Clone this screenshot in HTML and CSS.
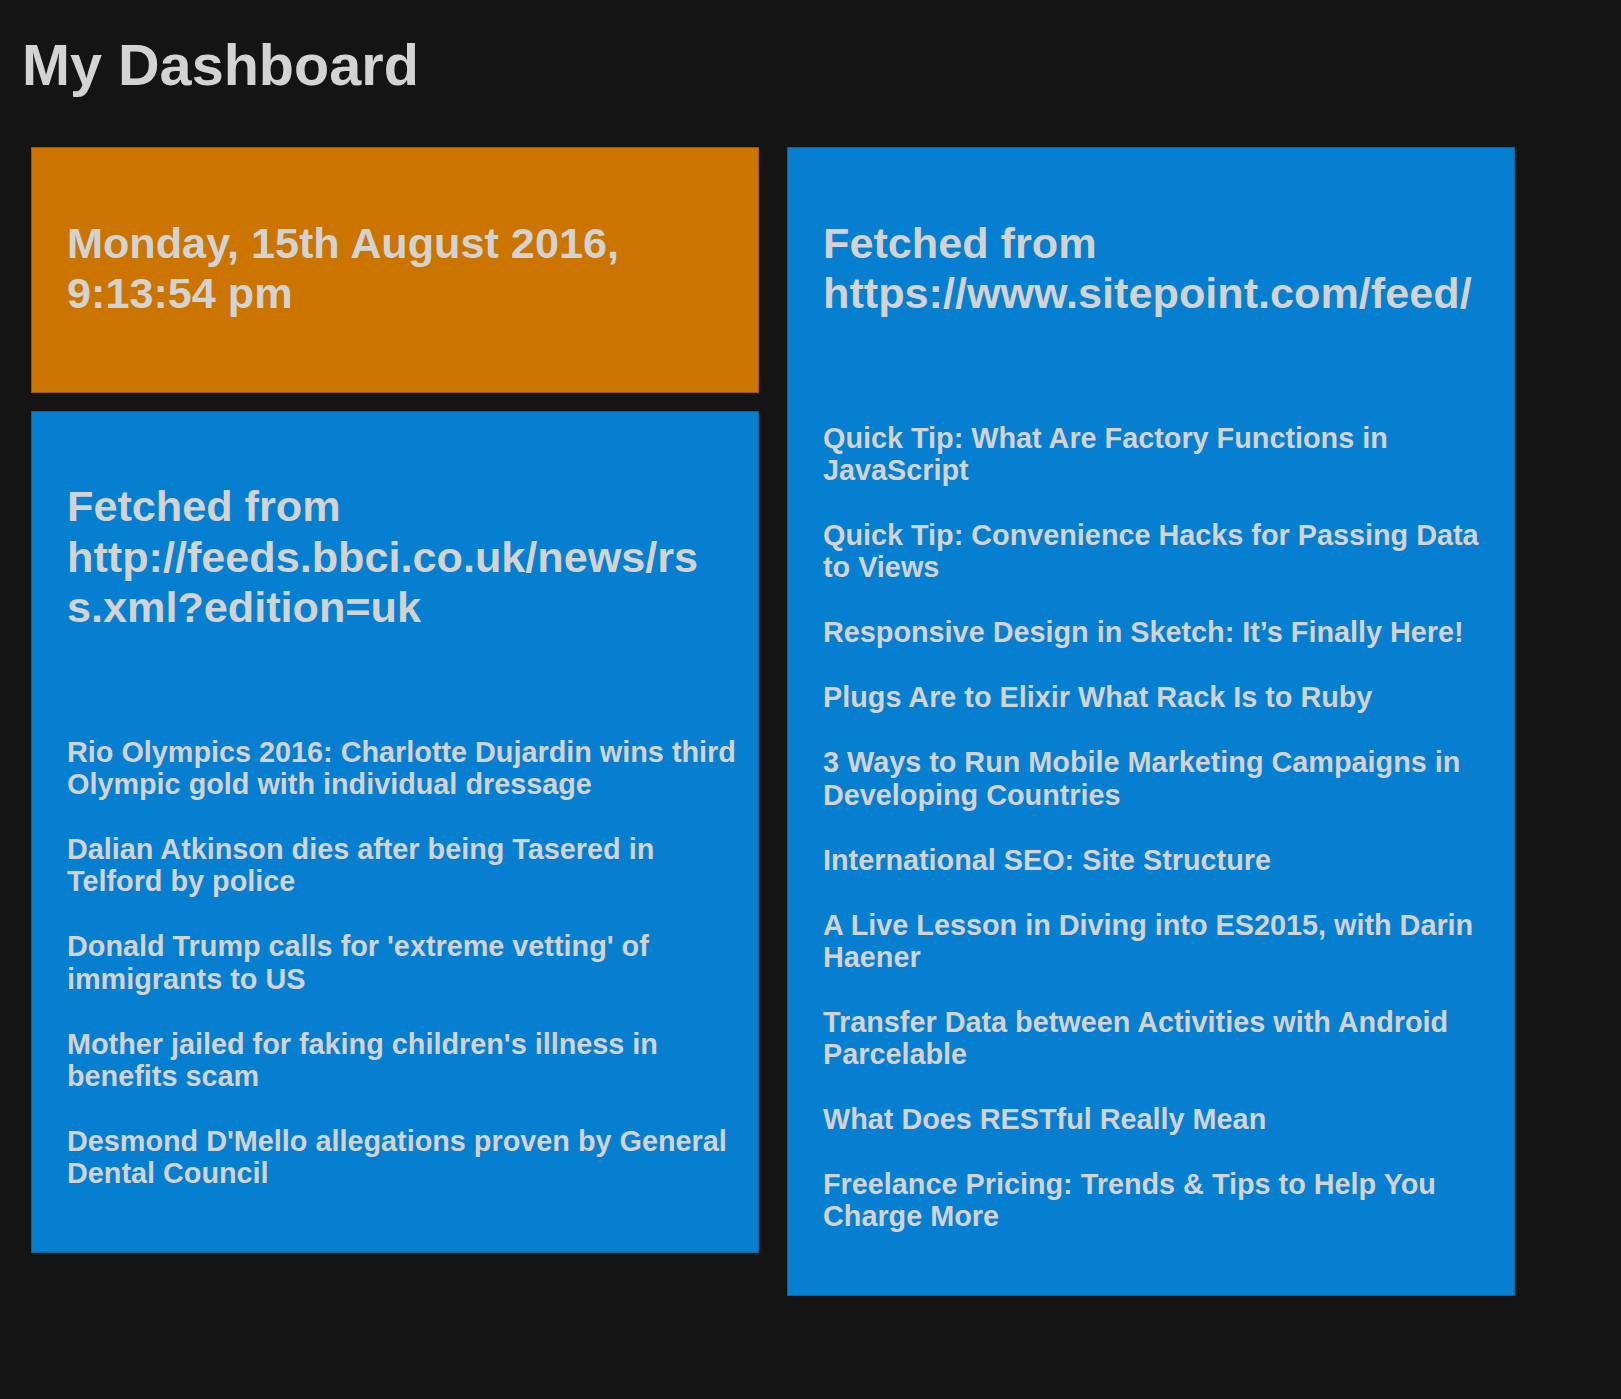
FILE: index.html
```html
<!DOCTYPE html>
<html lang="en">
<head>
<meta charset="utf-8">
<title>My Dashboard</title>
<link rel="stylesheet" href="styles.css">
</head>
<body>
<h1 class="page-title">My Dashboard</h1>
<div class="dashboard">
  <div class="column">
    <section class="widget widget-clock">
      <h2 class="widget-title">Monday, 15th August 2016, 9:13:54 pm</h2>
    </section>
    <section class="widget widget-feed">
      <h2 class="widget-title">Fetched from http://feeds.bbci.co.uk/news/rss.xml?edition=uk</h2>
      <ul class="feed-list">
        <li>Rio Olympics 2016: Charlotte Dujardin wins third Olympic gold with individual dressage</li>
        <li>Dalian Atkinson dies after being Tasered in Telford by police</li>
        <li>Donald Trump calls for 'extreme vetting' of immigrants to US</li>
        <li>Mother jailed for faking children's illness in benefits scam</li>
        <li>Desmond D'Mello allegations proven by General Dental Council</li>
      </ul>
    </section>
  </div>
  <div class="column">
    <section class="widget widget-feed">
      <h2 class="widget-title">Fetched from https://www.sitepoint.com/feed/</h2>
      <ul class="feed-list">
        <li>Quick Tip: What Are Factory Functions in JavaScript</li>
        <li>Quick Tip: Convenience Hacks for Passing Data to Views</li>
        <li>Responsive Design in Sketch: It’s Finally Here!</li>
        <li>Plugs Are to Elixir What Rack Is to Ruby</li>
        <li>3 Ways to Run Mobile Marketing Campaigns in Developing Countries</li>
        <li>International SEO: Site Structure</li>
        <li>A Live Lesson in Diving into ES2015, with Darin Haener</li>
        <li>Transfer Data between Activities with Android Parcelable</li>
        <li>What Does RESTful Really Mean</li>
        <li>Freelance Pricing: Trends &amp; Tips to Help You Charge More</li>
      </ul>
    </section>
  </div>
</div>
</body>
</html>
```
FILE: styles.css
```css
html, body {
  margin: 0;
  padding: 0;
  background: #141414;
}

body {
  font-family: "Liberation Sans", Arial, sans-serif;
  font-weight: bold;
  color: #d3d3d3;
  min-height: 1399px;
}

.page-title {
  margin: 0;
  padding: 32px 22px 0;
  font-size: 57.6px;
  line-height: 66px;
  font-weight: bold;
}

.dashboard {
  display: grid;
  grid-template-columns: 728px 728px;
  column-gap: 28px;
  align-items: start;
  margin-top: 49px;
  padding-left: 31px;
}

.column {
  display: flex;
  flex-direction: column;
  gap: 18px;
}

.widget {
  border: 1px solid rgba(0, 0, 0, 0.22);
  padding: 32px 19px 32px 35px;
}

.widget-clock {
  background: #cb7400;
}

.widget-feed {
  background: #077fd0;
}

.widget-title {
  margin: 37.5px 0 41px;
  padding-right: 20px;
  font-size: 43.2px;
  line-height: 50.5px;
  font-weight: bold;
  overflow-wrap: break-word;
}

.feed-list {
  list-style: none;
  margin: 0;
  padding: 62.5px 0 31px;
  display: flex;
  flex-direction: column;
  gap: 32.8px;
}

.feed-list li {
  font-size: 28.8px;
  line-height: 32.2px;
}
```
